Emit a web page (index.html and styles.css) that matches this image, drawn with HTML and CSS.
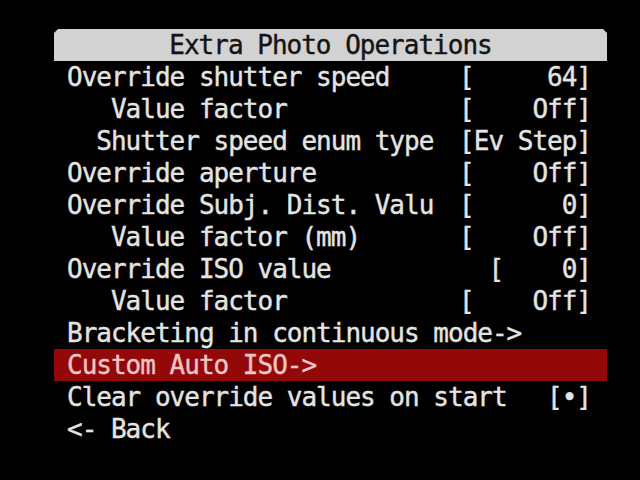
FILE: index.html
```html
<!DOCTYPE html>
<html lang="en">
<head>
    <meta charset="UTF-8">
    <title>Extra Photo Operations</title>
    <link rel="stylesheet" href="styles.css">
</head>
<body>

    <div class="menu">
        <div class="menu-title">Extra Photo Operations</div>

        <div class="row"><span class="label">Override shutter speed</span><span class="value">[     64]</span></div>
        <div class="row"><span class="label">   Value factor</span><span class="value">[    Off]</span></div>
        <div class="row"><span class="label">  Shutter speed enum type</span><span class="value">[Ev Step]</span></div>
        <div class="row"><span class="label">Override aperture</span><span class="value">[    Off]</span></div>
        <div class="row"><span class="label">Override Subj. Dist. Valu</span><span class="value">[      0]</span></div>
        <div class="row"><span class="label">   Value factor (mm)</span><span class="value">[    Off]</span></div>
        <div class="row"><span class="label">Override ISO value</span><span class="value">[    0]</span></div>
        <div class="row"><span class="label">   Value factor</span><span class="value">[    Off]</span></div>
        <div class="row"><span class="label">Bracketing in continuous mode-&gt;</span></div>
        <div class="row selected"><span class="label">Custom Auto ISO-&gt;</span></div>
        <div class="row"><span class="label">Clear override values on start</span><span class="value">[&bull;]</span></div>
        <div class="row"><span class="label">&lt;- Back</span></div>
    </div>

</body>
</html>
```

FILE: styles.css
```css
html, body {
    margin: 0;
    background-color: #000;
}
body {
    width: 640px;
    height: 480px;
    overflow: hidden;
    font-family: "DejaVu Sans Mono", monospace;
    font-size: 26px;
    letter-spacing: -1px;
    color: #e4e4e4;
    -webkit-text-stroke: 0.4px currentColor;
}
.menu {
    width: 553px;
    margin: 29px 0 0 54px;
}
.menu-title {
    height: 32px;
    line-height: 32px;
    text-align: center;
    background-color: #d2d2d2;
    color: #141414;
    clip-path: polygon(4px 0, calc(100% - 4px) 0, 100% 4px, 100% 100%, 0 100%, 0 4px);
}
.row {
    display: flex;
    justify-content: space-between;
    height: 32px;
    line-height: 32px;
    padding: 0 16px 0 13px;
    white-space: pre;
}
.selected {
    background-color: #930909;
    color: #f2c4c4;
}
```
